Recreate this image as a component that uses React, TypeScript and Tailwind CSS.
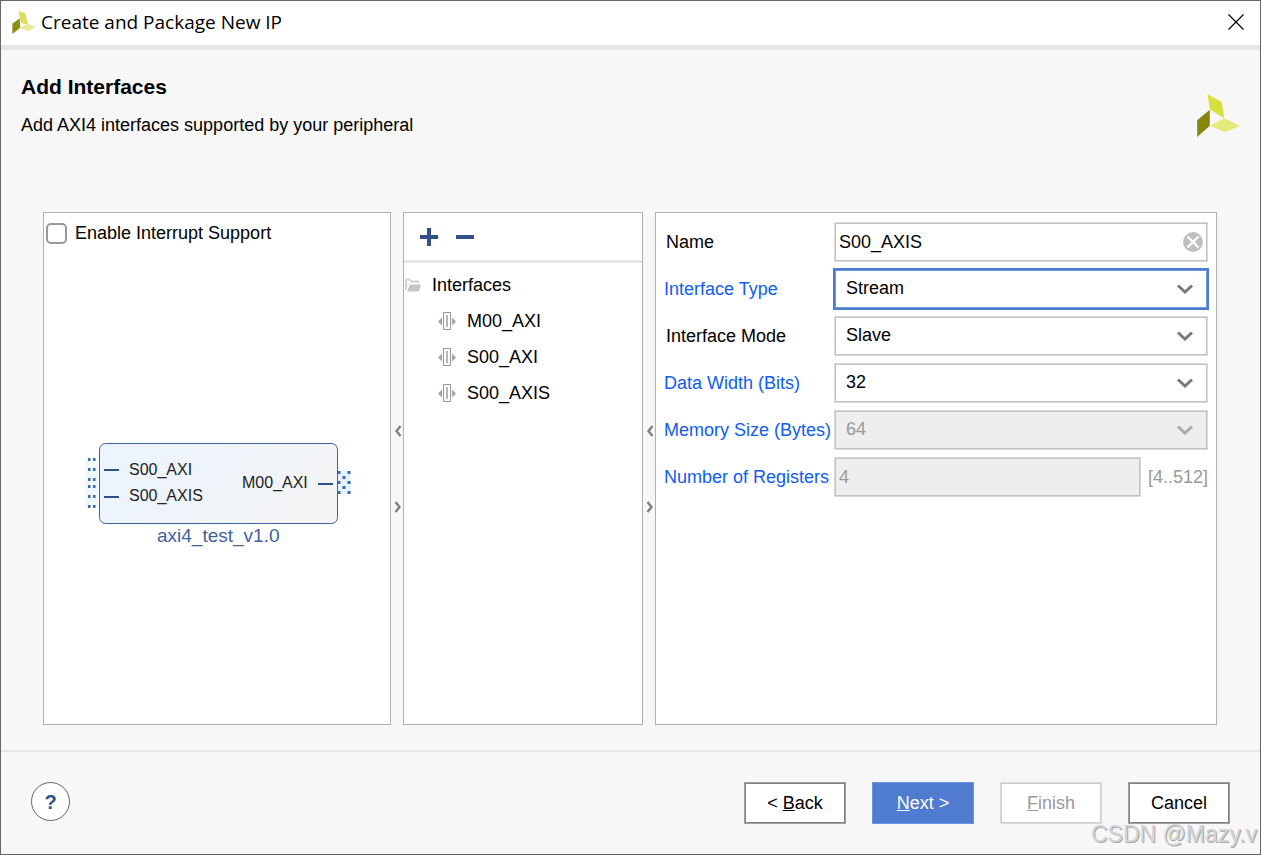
import { useState } from 'react'

const INTERFACES = ['M00_AXI', 'S00_AXI', 'S00_AXIS']

const SELECT_OPTIONS = {
  type:  ['Lite', 'Full', 'Stream'],
  mode:  ['Slave', 'Master'],
  width: ['32', '64', '128'],
  mem:   ['64', '128', '256'],
}

const FIELD_BORDER = 'border border-[#dadada] inset-ring-1 inset-ring-[#c2c2c2] '

function Logo({ className }: { className: string }) {
  return (
    <svg className={className} viewBox="114 282 128 129" aria-hidden="true">
      <polygon points="145,282 188,307 195,355 152,328" fill="#d6e03a" />
      <polygon points="152,329 152,377 114,411 114,361" fill="#86880c" />
      <polygon points="152,377 195,355 242,377 198,397" fill="#e4e97c" />
    </svg>
  )
}

// Title bar version, with the leaves closer together
function SmallLogo() {
  return (
    <svg className="h-[23px] w-6" viewBox="36 30 70 69" aria-hidden="true">
      <polygon points="54,30 75,36 83,72 62,66" fill="#d9e060" />
      <polygon points="58,52 60,80 36,99 36,68" fill="#8c8e14" />
      <polygon points="59,80 82,68 106,79 84,91" fill="#e6ea98" />
    </svg>
  )
}

function Splitter() {
  return (
    <div className="flex flex-col items-end justify-center gap-16 pr-px">
      <button type="button" aria-label="Collapse left">
        <svg className="h-3 w-2" viewBox="0 0 8 12" fill="none" stroke="#808080" strokeWidth="2.400">
          <path d="M6.500 1 2.500 6l4 5" />
        </svg>
      </button>
      <button type="button" aria-label="Collapse right">
        <svg className="h-3 w-2" viewBox="0 0 8 12" fill="none" stroke="#808080" strokeWidth="2.400">
          <path d="m1.500 1 4 5-4 5" />
        </svg>
      </button>
    </div>
  )
}

function InterfaceIcon() {
  return (
    <svg className="h-[18px] w-[18px] shrink-0" viewBox="0 0 18 18" aria-hidden="true">
      <path d="M4 5.500v8L0 9.500zM14 5.500v8l4-4z" fill="#a3a5a7" />
      <rect x="5.500" y=".5" width="7" height="17" fill="#fff" stroke="#97999b" />
      <rect x="8" y="3" width="2" height="12" fill="#b4b6b8" />
    </svg>
  )
}

// Block symbol of the peripheral with its bus pins
function BlockDiagram() {
  return (
    <svg
      width="268"
      height="121"
      viewBox="83 436 268 121"
      className="overflow-visible font-['Liberation_Sans',Arial,sans-serif]"
    >
      <defs>
        <linearGradient id="block" x1="0" y1="0" x2="1" y2="0.3">
          <stop offset="0" stopColor="#ebf4fe" />
          <stop offset="1" stopColor="#f3f4f6" />
        </linearGradient>
      </defs>
      <rect x="85" y="459" width="13" height="48" fill="#eef6fe" />
      <rect
        x="99.500"
        y="443.500"
        width="238"
        height="80"
        rx="6"
        fill="url(#block)"
        stroke="#3f5f9f"
      />
      <rect x="338" y="471" width="13" height="23" fill="#e6f2fd" />
      {[458, 468, 478, 485, 495, 505].map(y => (
        <g key={y} fill="#3c6ca5">
          <rect x="88" y={y} width="2.500" height="3" />
          <rect x="93" y={y} width="2.500" height="3" />
        </g>
      ))}
      <path
        d="M338 471h2.500v3H338zM347.500 471h3v3h-3zM342.500 476h3v3h-3zM338 481h2.500v3H338zM347.500 481h3v3h-3zM342.500 486h3v3h-3zM338 491h2.500v3H338zM347.500 491h3v3h-3z"
        fill="#3c6ca5"
      />
      <path d="M104 470h15M104 497h15M318 484h15" stroke="#2f4f8a" strokeWidth="2" />
      <g fontSize="16" fill="#222">
        <text x="129" y="475">S00_AXI</text>
        <text x="129" y="501">S00_AXIS</text>
        <text x="242" y="488">M00_AXI</text>
      </g>
      <text x="157" y="542" fontSize="19" fill="#3f5f9f">axi4_test_v1.0</text>
    </svg>
  )
}

interface SelectRowProps {
  id: string
  label: string
  options: string[]
  value: string
  link?: boolean
  active?: boolean
  disabled?: boolean
}

function SelectRow({ id, label, options, value, link, active, disabled }: SelectRowProps) {
  const [current, setCurrent] = useState(value)

  return (
    <>
      <label htmlFor={id} className={link ? 'text-[#0f5cf5]' : 'pl-0.5'}>{label}</label>
      <div className="relative">
        <select
          id={id}
          value={current}
          disabled={disabled}
          onChange={e => setCurrent(e.target.value)}
          className={
            'block h-10 w-full appearance-none pr-10 pb-0.5 pl-[11px] outline-none ' +
            (active ? 'border border-[#4a7bd0] ring-1 ring-[#4a7bd0] inset-ring-1 inset-ring-[#6f97dc] ' : FIELD_BORDER) +
            (disabled ? 'bg-[#eeeeee] text-[#999999] opacity-100' : 'bg-white text-black')
          }
        >
          {options.map(o => <option key={o} value={o}>{o}</option>)}
        </select>
        <svg
          className="pointer-events-none absolute top-[15px] right-[15px] h-2.5 w-4"
          viewBox="0 0 16 10"
          fill="none"
          stroke={disabled ? '#aaaaaa' : '#7a7a7a'}
          strokeWidth="3"
        >
          <path d="m1 1.500 7 6.500 7-6.500" />
        </svg>
      </div>
    </>
  )
}

export default function App() {
  const [interrupt, setInterrupt] = useState(false)
  const [name,      setName]      = useState('S00_AXIS')

  return (
    <div className="relative flex min-h-screen flex-col border border-[#666666] bg-[#f7f7f7] font-['Liberation_Sans',Arial,sans-serif] text-[18px] leading-6 text-black">
      {/* Title bar */}
      <header className="flex h-[49px] items-center border-b-5 border-[#e6e6e6] bg-white pr-4 pb-0.5 pl-[11px]">
        <SmallLogo />
        <span className="flex-1 pl-[5px] font-['Open_Sans','Noto_Sans',sans-serif] text-[19px]">Create and Package New IP</span>
        <button type="button" aria-label="Close">
          <svg className="h-4 w-4" viewBox="0 0 16 16" stroke="#000" strokeWidth="1.200">
            <path d="m.5.5 15 15M15.500.5l-15 15" />
          </svg>
        </button>
      </header>

      <main className="flex flex-1 flex-col pb-[25px]">
        <div className="flex items-end justify-between pt-[23px] pr-5 pl-5">
          <div>
            <h1 className="text-[21px] leading-7 font-bold">Add Interfaces</h1>
            <p className="mt-3">Add AXI4 interfaces supported by your peripheral</p>
          </div>
          <Logo className="h-[43px] w-[43px]" />
        </div>

        <div className="mt-[75px] grid flex-1 grid-cols-[348fr_12px_240fr_12px_562fr] pr-[43px] pl-[42px]">
          <section className="flex flex-col border border-[#b0b0b0] bg-white">
            <div className="h-14 pt-2 pl-0.5">
              <label className="flex items-center gap-2">
                <input
                  type="checkbox"
                  checked={interrupt}
                  onChange={e => setInterrupt(e.target.checked)}
                  className="h-[21px] w-[21px] appearance-none rounded-[5px] border-2 border-[#999999] bg-white checked:bg-[#4f7bd0]"
                />
                Enable Interrupt Support
              </label>
            </div>
            <div className="flex flex-1 items-center justify-center">
              <BlockDiagram />
            </div>
          </section>

          <Splitter />

          <section className="border border-[#b0b0b0] bg-white">
            <div className="flex h-[50px] items-center gap-[18px] border-b-3 border-[#e6e6e6] pl-4">
              <button type="button" aria-label="Add interface">
                <svg className="h-[18px] w-[18px]" viewBox="0 0 18 18" stroke="#34508a" strokeWidth="4">
                  <path d="M9 0v18M0 9h18" />
                </svg>
              </button>
              <button type="button" aria-label="Remove interface">
                <svg className="h-[18px] w-[18px]" viewBox="0 0 18 18" stroke="#34508a" strokeWidth="4">
                  <path d="M0 9h18" />
                </svg>
              </button>
            </div>

            <div className="pt-1">
              <div className="flex h-9 items-center gap-[11px] pl-px">
                <svg className="h-[14px] w-4 shrink-0" viewBox="0 0 16 14" aria-hidden="true">
                  <path d="M0 12V1.500Q0 .5 1 .5h4l1.500 2H13q1 0 1 1V5H5Q3.500 5 3 6.500L1.200 12z" fill="#d2d2d2" />
                  <path d="M2 2.500h2.500L6 4.500h6V5H4L2 8z" fill="#fff" />
                  <path d="M5 6.500h11l-1.500 5.500q-.4 1.500-1.500 1.500H2z" fill="#c6c6c6" />
                </svg>
                Interfaces
              </div>
              <ul>
                {INTERFACES.map(n => (
                  <li key={n} className="flex h-9 items-center gap-[11px] pl-[34px]">
                    <InterfaceIcon />
                    {n}
                  </li>
                ))}
              </ul>
            </div>
          </section>

          <Splitter />

          <section className="border border-[#b0b0b0] bg-white pt-[9px] pr-2 pl-2">
            <div className="grid grid-cols-[170px_1fr] items-center gap-y-[7px]">
              <label htmlFor="name" className="pl-0.5">Name</label>
              <div className={FIELD_BORDER + 'flex h-10 items-center bg-white pr-1 pl-1'}>
                <input
                  id="name"
                  value={name}
                  onChange={e => setName(e.target.value)}
                  className="min-w-0 flex-1 outline-none"
                />
                <button type="button" aria-label="Clear name" onClick={() => setName('')}>
                  <svg className="h-5 w-5" viewBox="0 0 20 20">
                    <circle cx="10" cy="10" r="10" fill="#c0c0c0" />
                    <path d="m4.500 4.500 11 11M15.500 4.500l-11 11" stroke="#fff" strokeWidth="2.400" />
                  </svg>
                </button>
              </div>

              <SelectRow id="type"  label="Interface Type"      options={SELECT_OPTIONS.type}  value="Stream" link active />
              <SelectRow id="mode"  label="Interface Mode"      options={SELECT_OPTIONS.mode}  value="Slave" />
              <SelectRow id="width" label="Data Width (Bits)"   options={SELECT_OPTIONS.width} value="32" link />
              <SelectRow id="mem"   label="Memory Size (Bytes)" options={SELECT_OPTIONS.mem}   value="64" link disabled />

              <label htmlFor="regs" className="text-[#0f5cf5]">Number of Registers</label>
              <div className="flex items-center gap-[7px] text-[#999999]">
                <input
                  id="regs"
                  value="4"
                  disabled
                  readOnly
                  className={FIELD_BORDER + 'h-10 min-w-0 flex-1 bg-[#eeeeee] pl-1'}
                />
                <span>[4..512]</span>
              </div>
            </div>
          </section>
        </div>
      </main>

      <footer className="flex items-start gap-[26px] border-t-2 border-[#e6e6e6] py-[30px] pr-[30px] pl-[30px]">
        <button
          type="button"
          aria-label="Help"
          className="mr-auto h-[39px] w-[39px] rounded-full border border-[#666666] bg-white text-[20px] font-bold text-[#2f4f8f]"
        >
          ?
        </button>
        <button type="button" className="h-[42px] w-[102px] border border-[#a0a0a0] bg-white inset-ring-1 inset-ring-[#808080]">
          &lt; <u>B</u>ack
        </button>
        <button type="button" className="h-[42px] w-[102px] border border-[#6b93e0] bg-[#4f7bd0] text-white">
          <u>N</u>ext &gt;
        </button>
        <button type="button" disabled className="h-[42px] w-[102px] border border-[#dadada] bg-white text-[#999999] inset-ring-1 inset-ring-[#cccccc]">
          <u>F</u>inish
        </button>
        <button type="button" className="h-[42px] w-[102px] border border-[#a0a0a0] bg-white inset-ring-1 inset-ring-[#808080]">
          Cancel
        </button>
      </footer>

      <span className="pointer-events-none absolute right-[3px] bottom-1 text-[23px] leading-8 text-[#d4d4d4] [text-shadow:1px_1px_0_#a8a8a8]">
        CSDN @Mazy.v
      </span>
    </div>
  )
}
